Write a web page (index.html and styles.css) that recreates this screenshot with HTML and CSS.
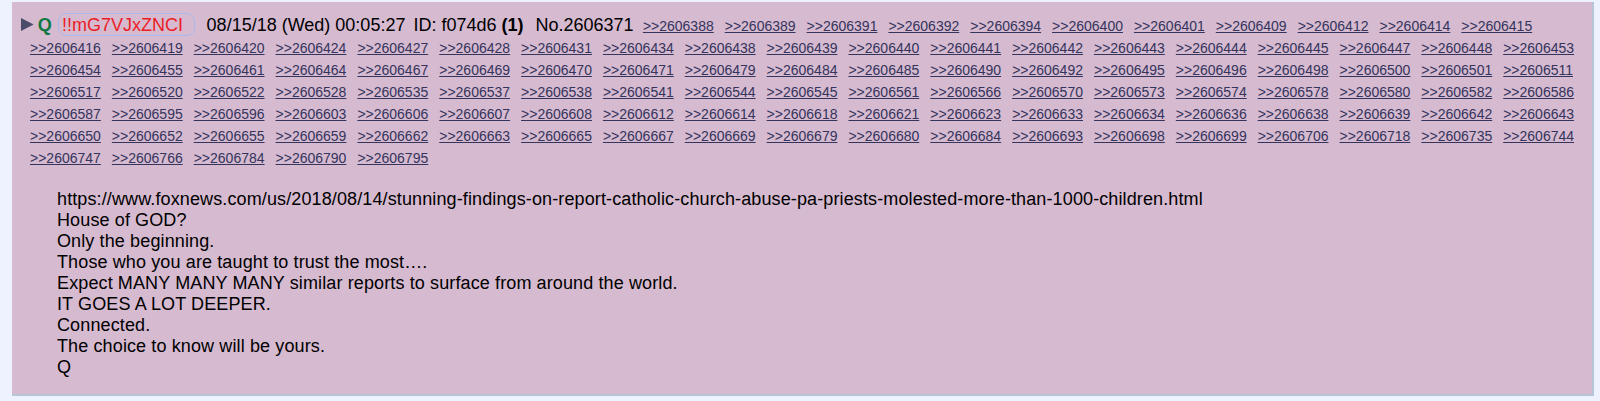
FILE: index.html
```html
<!DOCTYPE html>
<html lang="en">
<head>
  <meta charset="UTF-8">
  <title>No.2606371</title>
  <link rel="stylesheet" href="styles.css">
</head>
<body>
  <div class="post reply highlighted">
    <div class="post-info">
      <svg class="arrow" width="13" height="13" viewBox="0 0 13 13"><path d="M0 0 L12.6 6.5 L0 13 Z"/></svg><span class="name">Q</span><span class="trip">!!mG7VJxZNCI</span><span class="date">08/15/18 (Wed) 00:05:27</span><span class="poster-id">ID: f074d6 <b>(1)</b></span><span class="post-no">No.2606371</span><span class="backlinks" id="backlinks"></span>
    </div>
    <div class="post-message">
      https://www.foxnews.com/us/2018/08/14/stunning-findings-on-report-catholic-church-abuse-pa-priests-molested-more-than-1000-children.html<br>
      House of GOD?<br>
      Only the beginning.<br>
      Those who you are taught to trust the most….<br>
      Expect MANY MANY MANY similar reports to surface from around the world.<br>
      IT GOES A LOT DEEPER.<br>
      Connected.<br>
      The choice to know will be yours.<br>
      Q
    </div>
  </div>

  <script>
    // replies to this post
    var replies = [
      2606388, 2606389, 2606391, 2606392, 2606394, 2606400, 2606401, 2606409, 2606412, 2606414, 2606415,
      2606416, 2606419, 2606420, 2606424, 2606427, 2606428, 2606431, 2606434, 2606438, 2606439, 2606440,
      2606441, 2606442, 2606443, 2606444, 2606445, 2606447, 2606448, 2606453,
      2606454, 2606455, 2606461, 2606464, 2606467, 2606469, 2606470, 2606471, 2606479, 2606484, 2606485,
      2606490, 2606492, 2606495, 2606496, 2606498, 2606500, 2606501, 2606511,
      2606517, 2606520, 2606522, 2606528, 2606535, 2606537, 2606538, 2606541, 2606544, 2606545, 2606561,
      2606566, 2606570, 2606573, 2606574, 2606578, 2606580, 2606582, 2606586,
      2606587, 2606595, 2606596, 2606603, 2606606, 2606607, 2606608, 2606612, 2606614, 2606618, 2606621,
      2606623, 2606633, 2606634, 2606636, 2606638, 2606639, 2606642, 2606643,
      2606650, 2606652, 2606655, 2606659, 2606662, 2606663, 2606665, 2606667, 2606669, 2606679, 2606680,
      2606684, 2606693, 2606698, 2606699, 2606706, 2606718, 2606735, 2606744,
      2606747, 2606766, 2606784, 2606790, 2606795
    ];
    var box = document.getElementById('backlinks');
    for (var i = 0; i < replies.length; i++) {
      var a = document.createElement('a');
      a.href = '#' + replies[i];
      a.className = 'backlink';
      a.textContent = '>>' + replies[i];
      box.appendChild(a);
      box.appendChild(document.createTextNode(' '));
    }
  </script>
</body>
</html>
```

FILE: styles.css
```css
/* page */
body {
  margin: 0;
  padding: 2px 6px 0 12px;
  background-color: #eef2ff;
  font-family: "Liberation Sans", Arial, sans-serif;
  font-size: 18px;
  color: #000;
}
.post {
  background-color: #d6bad0;
  border-right: 2px solid #b7c5d9;
  border-bottom: 2px solid #b7c5d9;
  padding: 12px 0 16.5px 0;
}

/* header line with reply links */
.post-info {
  line-height: 22px;
  padding-left: 18px;
  padding-right: 8px;
  text-indent: -9.3px;
}
.arrow {
  fill: #4a4a6a;
  margin-right: 4px;
}
.name {
  color: #117743;
  font-weight: bold;
  margin-right: 6.7px;
}
.trip {
  color: #ec1c24;
  border: 1px solid #a9b9ee;
  border-radius: 8px;
  padding: 1px 11px 0 2.5px;
  margin-right: 11.7px;
}
.date {
  margin-right: 8px;
}
.poster-id {
  margin-right: 12px;
}
.post-no {
  margin-right: 9.3px;
}
.backlinks {
  font-size: 14px;
  line-height: 14px;
}
.backlink {
  color: #34345c;
  text-decoration: underline;
  margin-right: 7.1px;
}

/* message */
.post-message {
  margin-top: 20.5px;
  padding-left: 45px;
  line-height: 21px;
  letter-spacing: 0.12px;
}
```
